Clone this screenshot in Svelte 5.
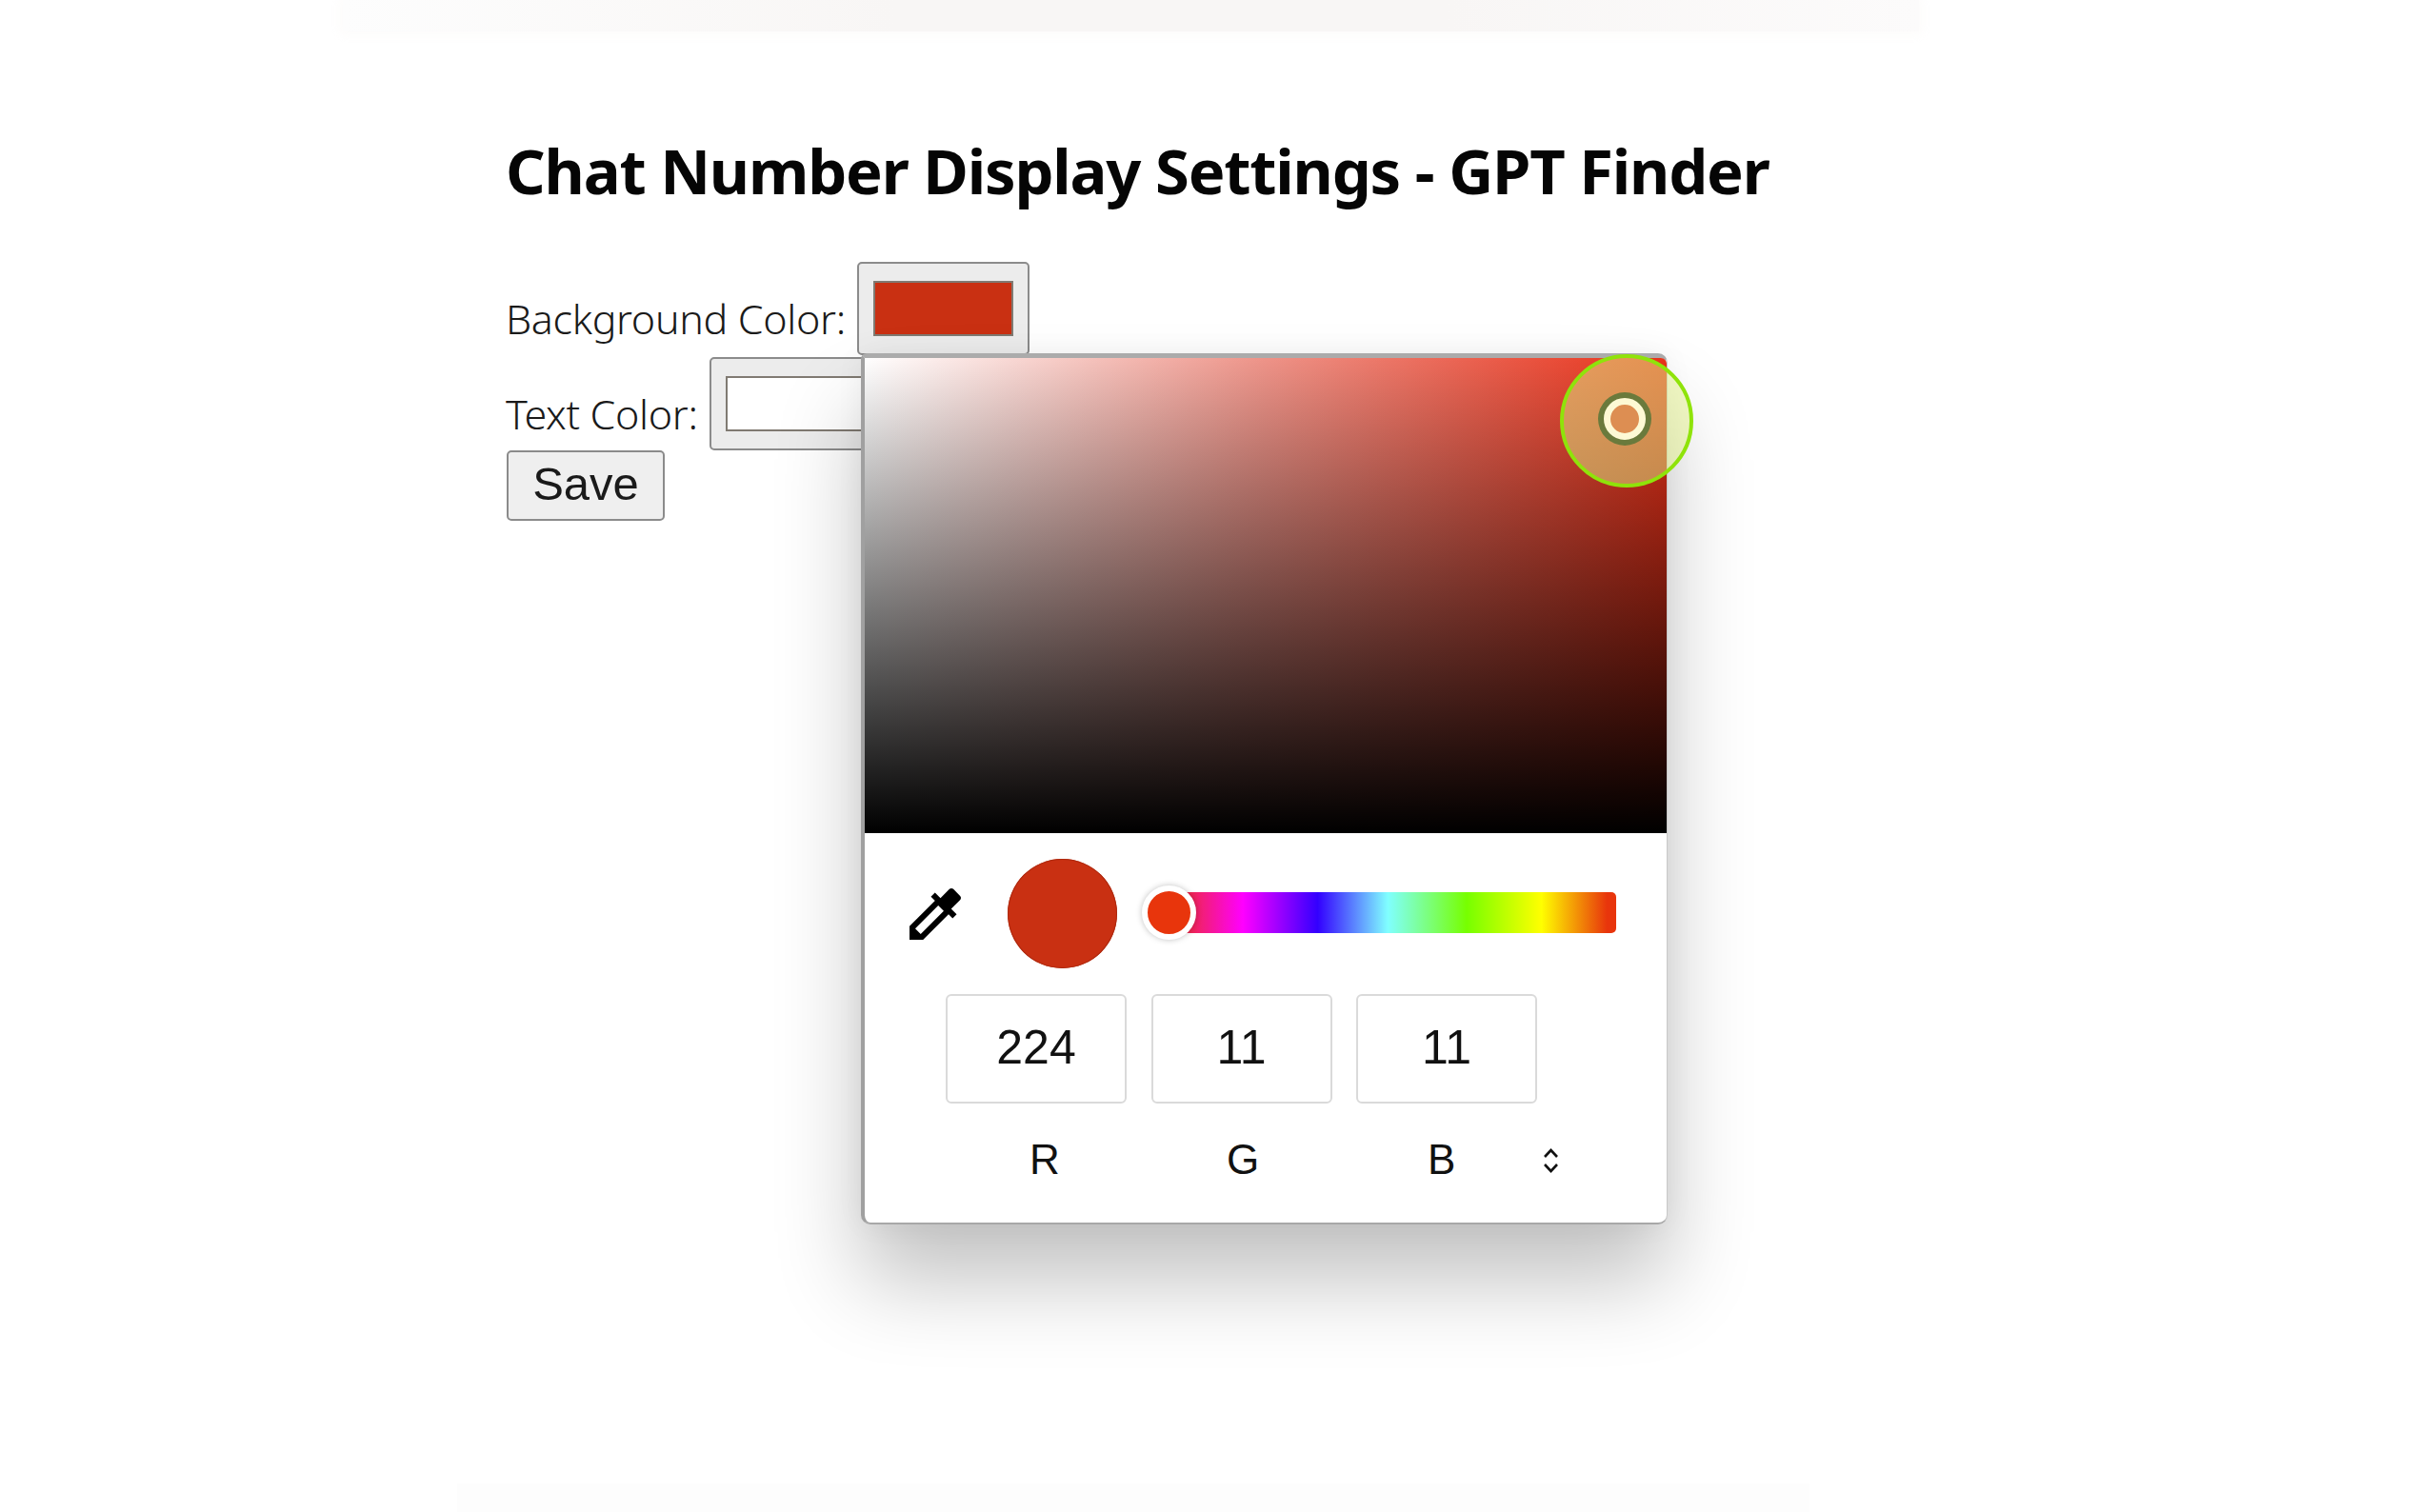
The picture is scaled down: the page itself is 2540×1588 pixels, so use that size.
<script>
  const channels = [224, 11, 11];
  const labels = [
    { t: 'R', w: 207 },
    { t: 'G', w: 211 },
    { t: 'B', w: 121 }
  ];
</script>

<div class="page">
  <div class="band-top"></div>
  <main class="form">
    <h1>Chat Number Display Settings - GPT Finder</h1>
    <div class="row first">
      <span class="label">Background Color:</span>
      <div class="color-btn"><div class="swatch red"></div></div>
    </div>
    <div class="row second">
      <span class="label">Text Color:</span>
      <div class="color-btn"><div class="swatch white"></div></div>
    </div>
    <button class="save">Save</button>
  </main>

  <div class="popup">
    <div class="sv"></div>
    <div class="controls">
      <svg class="dropper" viewBox="0 0 24 24" aria-hidden="true">
        <path d="M20.71 5.63l-2.34-2.34c-.39-.39-1.02-.39-1.41 0l-3.12 3.12-1.93-1.91-1.41 1.41 1.42 1.42L3 16.25V21h4.75l8.92-8.92 1.42 1.42 1.41-1.41-1.92-1.92 3.12-3.12c.4-.4.4-1.03.01-1.42zM6.92 19L5 17.08l8.06-8.06 1.92 1.92L6.92 19z"/>
      </svg>
      <div class="preview"></div>
      <div class="hue"><div class="hue-thumb"></div></div>
    </div>
    <div class="inputs">
      {#each channels as c}
        <input class="num" type="text" value={c} readonly />
      {/each}
    </div>
    <div class="labels">
      {#each labels as l}
        <span class="ch" style="width:{l.w}px">{l.t}</span>
      {/each}
      <svg class="spin" viewBox="0 0 17 26" aria-hidden="true">
        <path d="M2 9 L8.5 2 L15 9 M2 17 L8.5 24 L15 17" fill="none" stroke="#111" stroke-width="2.6"/>
      </svg>
    </div>
    <div class="halo"><div class="ring"><div class="ring-in"></div></div></div>
  </div>

  <div class="band-bottom"></div>
</div>

<style>
  :global(body) { margin: 0; background: #fff; }
  .page {
    position: relative;
    width: 2540px;
    height: 1588px;
    overflow: hidden;
    background: #fff;
    display: flex;
    flex-direction: column;
  }
  .band-top {
    height: 33px;
    margin: 0 525px 0 360px;
    flex: none;
    background: linear-gradient(to right, #fdfdfd, #f8f6f5 35%, #f8f6f5 70%, #fcfbfb);
    box-shadow: 0 0 10px 4px rgba(252, 251, 250, .8);
  }
  .band-bottom {
    position: absolute;
    left: 480px;
    right: 640px;
    bottom: 0;
    height: 30px;
    background: #fdfdfd;
  }
  .form {
    padding: 109px 0 0 531px;
    color: #000;
    font-family: "Noto Sans", sans-serif;
  }
  h1 {
    margin: 0 0 59px;
    font-size: 65px;
    line-height: 74px;
    font-weight: 700;
    letter-spacing: -1.17px;
    color: #050505;
  }
  .row { display: flex; align-items: flex-end; gap: 12px; }
  .row.second { margin-top: 2px; }
  .label {
    font-size: 43px;
    line-height: 60px;
    padding-bottom: 8px;
    font-weight: 300;
    letter-spacing: -0.32px;
    color: #1a1a1a;
  }
  .color-btn {
    box-sizing: border-box;
    width: 181px;
    height: 98px;
    padding: 18px 15px;
    border: 2px solid #8b8b8b;
    border-radius: 5px;
    background: #ececec;
  }
  .swatch { height: 100%; box-sizing: border-box; border: 2px solid #807a72; }
  .swatch.red { background: #c93012; }
  .swatch.white { background: #fff; }
  .save {
    display: block;
    box-sizing: border-box;
    width: 166px;
    height: 74px;
    margin: 0 0 0 1px;
    padding: 0 0 5px;
    border: 2px solid #8b8b8b;
    border-radius: 5px;
    background: #efefef;
    font-family: "Liberation Sans", Arial, sans-serif;
    font-size: 49px;
    color: #1a1a1a;
  }
  .popup {
    position: absolute;
    left: 904px;
    top: 371px;
    width: 847px;
    height: 915px;
    box-sizing: border-box;
    background: #fff;
    border-style: solid;
    border-color: #ababab #c8c8c8 #a8a8a8 #a0a0a0;
    border-width: 5px 1px 2px 4px;
    border-radius: 6px 10px 10px 10px;
    box-shadow: 0 60px 90px rgba(0, 0, 0, .24), 0 0 30px rgba(0, 0, 0, .05);
  }
  .sv {
    height: 499px;
    background:
      linear-gradient(to top, #000, rgba(0, 0, 0, 0)),
      linear-gradient(to right, #fff, #ee9388 50%, #e8321a);
    border-radius: 0 6px 0 0;
  }
  .controls {
    display: flex;
    align-items: center;
    padding: 27px 0 0 38px;
  }
  .dropper { width: 72px; height: 72px; flex: none; fill: #000; }
  .preview {
    width: 115px;
    height: 115px;
    margin-left: 40px;
    flex: none;
    border-radius: 50%;
    background: #c93012;
    box-shadow: inset 0 0 0 1px #ad2a10;
  }
  .hue {
    position: relative;
    width: 470px;
    height: 43px;
    margin: -3px 0 0 54px;
    border-radius: 5px;
    background: linear-gradient(to right, #e8350c 0%, #ff00ff 16.6%, #3300ff 33.3%, #80ffff 49%, #77ff00 66.6%, #ffff00 83.3%, #e8350c 98%);
  }
  .hue-thumb {
    position: absolute;
    left: -28px;
    top: -7px;
    width: 45px;
    height: 45px;
    border: 6px solid #fff;
    border-radius: 50%;
    background: #e8350c;
    box-shadow: 0 0 6px rgba(0, 0, 0, .25);
  }
  .inputs {
    display: flex;
    gap: 25.5px;
    margin-top: 27px;
    padding-left: 85px;
  }
  .num {
    box-sizing: border-box;
    width: 190px;
    height: 115px;
    padding: 0 0 3px;
    border: 2px solid #dadada;
    border-radius: 6px;
    background: #fff;
    text-align: center;
    font-family: "Liberation Sans", Arial, sans-serif;
    font-size: 50px;
    color: #111;
    outline: none;
  }
  .labels {
    display: flex;
    align-items: center;
    height: 118px;
    padding-left: 173px;
  }
  .ch {
    flex: none;
    font-family: "Liberation Sans", Arial, sans-serif;
    font-size: 44px;
    color: #111;
  }
  .spin { width: 17px; height: 26px; flex: none; margin-top: 2px; }
  .halo {
    position: absolute;
    left: 730px;
    top: -4px;
    width: 140px;
    height: 140px;
    box-sizing: border-box;
    border: 4px solid #8fe30a;
    border-radius: 50%;
    background: rgba(225, 240, 135, .5);
    display: flex;
    align-items: center;
    justify-content: center;
  }
  .ring {
    box-sizing: border-box;
    width: 56px;
    height: 56px;
    margin: -4px 0 0 -4px;
    padding: 6px;
    border-radius: 50%;
    background: #6a7a3c;
  }
  .ring-in {
    box-sizing: border-box;
    width: 100%;
    height: 100%;
    border: 7px solid #fdf9d4;
    border-radius: 50%;
    background: #dd8e52;
  }
</style>
